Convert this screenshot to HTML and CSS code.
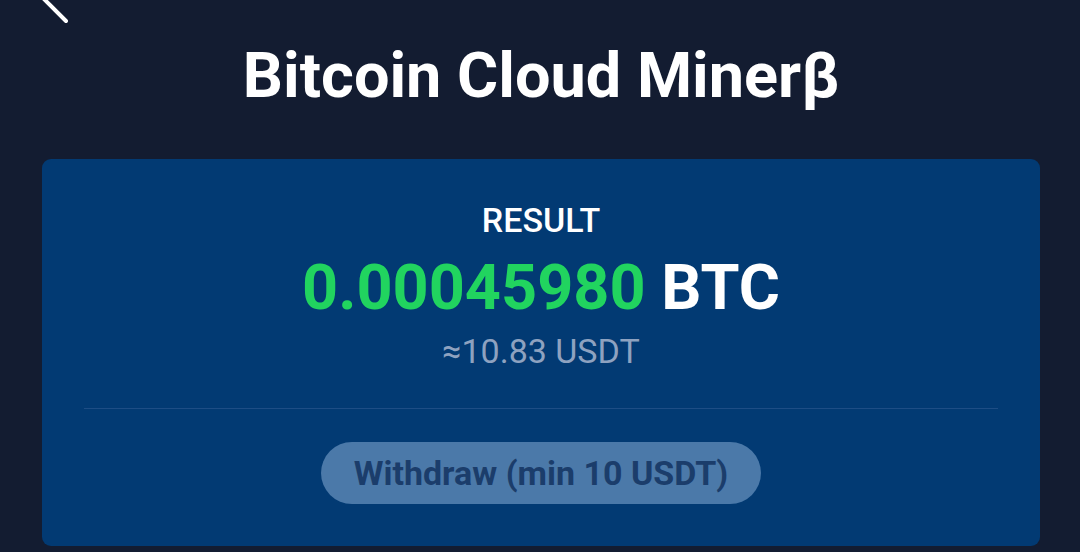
FILE: index.html
```html
<!DOCTYPE html>
<html>
<head>
<meta charset="utf-8">
<link rel="stylesheet" href="styles.css">
</head>
<body>
<div class="page">
  <div class="topbar">
    <svg class="back" width="60" height="60" viewBox="0 0 60 60"><path d="M38 -10 L12 16 L35 39" fill="none" stroke="#ffffff" stroke-width="4" stroke-linecap="round" stroke-linejoin="round"/></svg>
  </div>
  <h1 class="title">Bitcoin Cloud Minerβ</h1>
  <div class="card">
    <div class="label">RESULT</div>
    <div class="amount"><span class="num">0.00045980</span> BTC</div>
    <div class="approx">≈10.83 USDT</div>
    <div class="divider"></div>
    <div class="actions"><button class="btn">Withdraw (min 10 USDT)</button></div>
  </div>
</div>
</body>
</html>
```
FILE: styles.css
```css
html, body {
  margin: 0;
  padding: 0;
  background: #131c31;
  font-family: Roboto, "Liberation Sans", sans-serif;
  overflow: hidden;
}
.page {
  width: 1080px;
  height: 552px;
  padding: 0 40px 0 42px;
  box-sizing: border-box;
}
.topbar {
  height: 0;
  position: relative;
}
.back {
  position: absolute;
  left: -11px;
  top: -18px;
}
.title {
  margin: 0;
  padding-top: 41px;
  height: 159px;
  box-sizing: border-box;
  text-align: center;
  color: #ffffff;
  font-size: 63px;
  font-weight: 700;
  line-height: 70px;
}
.card {
  background: #023a73;
  border-radius: 9px;
  padding: 41px 42px 42px;
  text-align: center;
}
.label {
  color: #ffffff;
  font-size: 34px;
  font-weight: 500;
  line-height: 40px;
}
.amount {
  color: #ffffff;
  font-size: 63px;
  font-weight: 700;
  line-height: 70px;
  margin-top: 13px;
}
.num {
  color: #21d45f;
}
.approx {
  color: #8ea2c0;
  font-size: 34px;
  line-height: 40px;
  margin-top: 8px;
}
.divider {
  height: 1px;
  background: #1d4d85;
  margin-top: 37px;
}
.actions {
  padding-top: 33px;
}
.btn {
  border: none;
  height: 62px;
  padding: 0 33px;
  border-radius: 31px;
  background: #4b79a9;
  color: #1b3d6b;
  font-family: Roboto, "Liberation Sans", sans-serif;
  font-size: 34px;
  font-weight: 700;
}
```
